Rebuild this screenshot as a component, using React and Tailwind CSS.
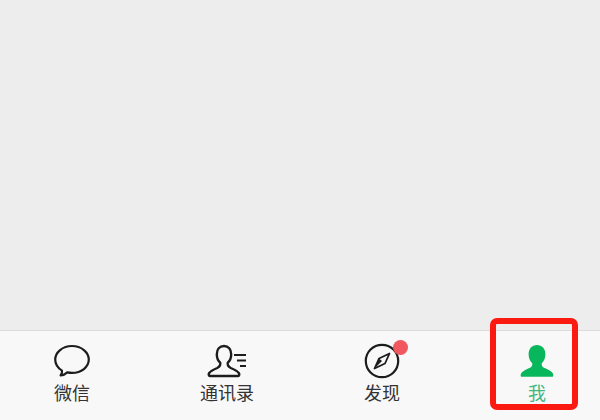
const fontCjk = "font-['Liberation_Sans','Noto_Sans_CJK_SC',sans-serif]"

const ChatIcon = () => (
  <svg width="38" height="34" viewBox="0 0 38 34" fill="none" stroke="#1c1c1c" strokeWidth="2.200">
    <path d="M19 2C9.600 2 2.200 8.200 2.200 15.600c0 4.600 2.800 8.600 6.800 11 .3 1.800-.5 3.600-1.400 4.800 2.600-.2 5-1.400 6.600-3 1.500.3 3.100.5 4.800.5 9.400 0 16.800-5.900 16.800-13.300S28.400 2 19 2z" strokeLinejoin="round" />
  </svg>
)

const ContactsIcon = () => (
  <svg width="42" height="34" viewBox="-1 0 42 34" fill="none" stroke="#1c1c1c" strokeWidth="2.400">
    <path d="M17 2c-4.400 0-7.200 3.400-7.200 8.200 0 3.600 1.400 6.600 3.400 8.400.6 2.600-.4 4.200-3 5.400-3 1.300-6.600 3-8 5-.8 1.100-.6 3 .8 3h28c1.400 0 1.600-1.900.8-3-1.400-2-5-3.700-8-5-2.600-1.200-3.600-2.800-3-5.400 2-1.800 3.400-4.800 3.400-8.400C24.200 5.400 21.400 2 17 2z" strokeLinejoin="round" />
    <path d="M27 11h12M30 16.500h9M33 22h6" strokeWidth="2" />
  </svg>
)

const CompassIcon = () => (
  <svg width="36" height="36" viewBox="0 0 36 36" fill="none" stroke="#1c1c1c">
    <circle cx="18" cy="18" r="16.200" strokeWidth="2.200" />
    <path d="M25.500 10.500L15 15.500 10.500 25.500 21 20.500z" strokeWidth="1.800" strokeLinejoin="round" />
    <path d="M10.500 25.500L15 15.500 18 18z" fill="#1c1c1c" stroke="none" />
  </svg>
)

const MeIcon = () => (
  <svg width="34" height="32" viewBox="0 0 34 32" fill="#08b65c">
    <path d="M17 0c-5 0-8.400 3.800-8.400 9.200 0 3.800 1.500 7 3.600 9 .5 2.300-.4 3.700-2.800 4.800-3 1.300-6.500 2.800-8 5-.8 1.200-1.200 3.800.4 3.800h30.400c1.600 0 1.200-2.600.4-3.800-1.500-2.200-5-3.700-8-5-2.400-1.100-3.300-2.500-2.800-4.800 2.100-2 3.600-5.200 3.600-9C25.400 3.800 22 0 17 0z" />
  </svg>
)

const tabs = [
  { label: "微信", icon: <ChatIcon /> },
  { label: "通讯录", icon: <ContactsIcon /> },
  { label: "发现", icon: <CompassIcon />, dot: true },
  { label: "我", icon: <MeIcon />, active: true },
]

export default function App() {
  return (
    <div className={`relative flex h-[420px] w-[600px] flex-col overflow-hidden bg-[#ededed] ${fontCjk}`}>
      <div className="flex-1" />

      {/* bottom tab bar */}
      <div className="flex h-[90px] items-start justify-between border-t border-[#dcdcdc] bg-[#f8f8f8] pl-[32px] pr-[23px]">
        {tabs.map((tab) => (
          <div key={tab.label} className="flex w-[80px] flex-col items-center">
            <div className="relative mt-[12px] flex h-[36px] items-center justify-center">
              {tab.icon}
              {tab.dot && (
                <span className="absolute right-[-8px] top-[-3px] h-[15px] w-[15px] rounded-full bg-[#f0575f]" />
              )}
            </div>
            <span className={`mt-[3px] text-[18px] leading-[24px] ${tab.active ? "text-[#3fb77f]" : "text-[#333333]"}`}>
              {tab.label}
            </span>
          </div>
        ))}
      </div>

      {/* red highlight */}
      <div className="absolute left-[490px] top-[318px] h-[92px] w-[88px] rounded-[7px] border-[6px] border-[#fb1a10]" />
    </div>
  )
}
